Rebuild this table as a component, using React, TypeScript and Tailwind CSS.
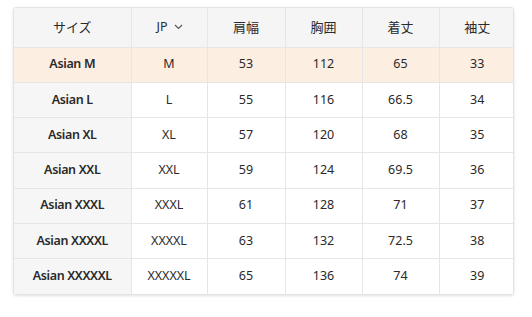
import React from 'react';

const headers = ['肩幅', '胸囲', '着丈', '袖丈'];

const rows = [
  ['Asian M', 'M', '53', '112', '65', '33'],
  ['Asian L', 'L', '55', '116', '66.5', '34'],
  ['Asian XL', 'XL', '57', '120', '68', '35'],
  ['Asian XXL', 'XXL', '59', '124', '69.5', '36'],
  ['Asian XXXL', 'XXXL', '61', '128', '71', '37'],
  ['Asian XXXXL', 'XXXXL', '63', '132', '72.5', '38'],
  ['Asian XXXXXL', 'XXXXXL', '65', '136', '74', '39'],
];

const App = () => {
  return (
    <div className="w-[532px] h-[317px] bg-white pt-[7px] pl-[13px] font-['Noto_Sans','Noto_Sans_CJK_JP',sans-serif] text-[12.5px] text-[#2a2a2a]">
      <div className="w-[501px] rounded-[3px] overflow-hidden border border-[#e3e3e3] shadow-[0_1px_3px_rgba(0,0,0,0.12)]">
        <table className="w-full border-collapse table-fixed">
          <colgroup>
            <col className="w-[117px]" />
            <col className="w-[76px]" />
            <col className="w-[78px]" />
            <col className="w-[77px]" />
            <col className="w-[77px]" />
            <col className="w-[76px]" />
          </colgroup>
          <thead>
            <tr className="h-[39px] bg-[#f5f5f6]">
              <th className="font-normal text-[13px] border-r border-[#e6e6e6]">サイズ</th>
              <th className="font-normal border-r border-[#e6e6e6]">
                <span className="inline-flex items-center gap-[7px] pl-[2px]">
                  JP
                  <svg width="9" height="6" viewBox="0 0 9 6" fill="none">
                    <path d="M1 1l3.5 3.5L8 1" stroke="#555" strokeWidth="1.1" />
                  </svg>
                </span>
              </th>
              {headers.map((h, i) => (
                <th key={h} className={`font-normal text-[13px] ${i < headers.length - 1 ? 'border-r border-[#e6e6e6]' : ''}`}>
                  {h}
                </th>
              ))}
            </tr>
          </thead>
          <tbody>
            {rows.map((r, ri) => (
              <tr
                key={r[0]}
                className={`h-[35.3px] border-t border-[#e6e6e6] ${ri === 0 ? 'bg-[#fdeee2]' : 'bg-white'}`}
              >
                {r.map((c, ci) => (
                  <td
                    key={ci}
                    className={`text-center ${ci === 0 ? `font-semibold tracking-[-0.35px] ${ri === 0 ? '' : 'bg-[#f6f6f6]'}` : ''} ${ci < r.length - 1 ? 'border-r border-[#e6e6e6]' : ''}`}
                  >
                    {c}
                  </td>
                ))}
              </tr>
            ))}
          </tbody>
        </table>
      </div>
    </div>
  );
};

export default App;
